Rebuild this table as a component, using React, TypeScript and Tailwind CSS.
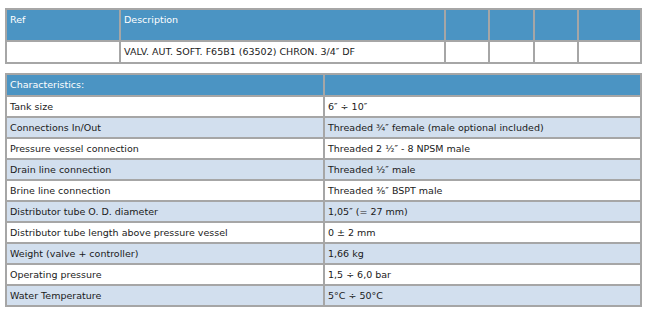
const rows: [string, string][] = [
  ["Tank size", "6\u2033 \u00f7 10\u2033"],
  ["Connections In/Out", "Threaded \u00be\u2033 female (male optional included)"],
  ["Pressure vessel connection", "Threaded 2 \u00bd\u2033 - 8 NPSM male"],
  ["Drain line connection", "Threaded \u00bd\u2033 male"],
  ["Brine line connection", "Threaded \u215c\u2033 BSPT male"],
  ["Distributor tube O. D. diameter", "1,05\u2033 (= 27 mm)"],
  ["Distributor tube length above pressure vessel", "0 \u00b1 2 mm"],
  ["Weight (valve + controller)", "1,66 kg"],
  ["Operating pressure", "1,5 \u00f7 6,0 bar"],
  ["Water Temperature", "5\u00b0C \u00f7 50\u00b0C"],
]

export default function App() {
  return (
    <div className="w-[651px] h-[311px] bg-white pt-[8px] pl-[5px] font-['DejaVu_Sans',sans-serif] text-[9.5px] text-[#1a1a1a] leading-none">
      {/* Product table */}
      <div className="w-[637px] grid grid-cols-[112px_323px_42px_43px_42px_61px] gap-[2px] p-[2px] bg-[#a6a6a6]">
        <div className="h-[30px] bg-[#4b94c3] text-white pl-[3px] pt-[5px]">Ref</div>
        <div className="h-[30px] bg-[#4b94c3] text-white pl-[3px] pt-[5px]">Description</div>
        <div className="h-[30px] bg-[#4b94c3]"></div>
        <div className="h-[30px] bg-[#4b94c3]"></div>
        <div className="h-[30px] bg-[#4b94c3]"></div>
        <div className="h-[30px] bg-[#4b94c3]"></div>
        <div className="h-[20px] bg-white"></div>
        <div className="h-[20px] bg-white pl-[3px] flex items-center whitespace-nowrap">
          VALV. AUT. SOFT. F65B1 (63502) CHRON. 3/4&#8243; DF
        </div>
        <div className="h-[20px] bg-white"></div>
        <div className="h-[20px] bg-white"></div>
        <div className="h-[20px] bg-white"></div>
        <div className="h-[20px] bg-white"></div>
      </div>

      {/* Characteristics */}
      <div className="mt-[9px] w-[637px] grid grid-cols-[316px_315px] gap-[2px] p-[2px] bg-[#a6a6a6]">
        <div className="h-[20px] bg-[#4b94c3] text-white pl-[3px] flex items-center">Characteristics:</div>
        <div className="h-[20px] bg-[#4b94c3]"></div>
        {rows.map(([k, v], i) => (
          <div key={k} className="contents">
            <div className={`h-[19px] pl-[3px] flex items-center whitespace-nowrap ${i % 2 ? "bg-[#d2dfee]" : "bg-white"}`}>{k}</div>
            <div className={`h-[19px] pl-[3px] flex items-center whitespace-nowrap ${i % 2 ? "bg-[#d2dfee]" : "bg-white"}`}>{v}</div>
          </div>
        ))}
      </div>
    </div>
  )
}
